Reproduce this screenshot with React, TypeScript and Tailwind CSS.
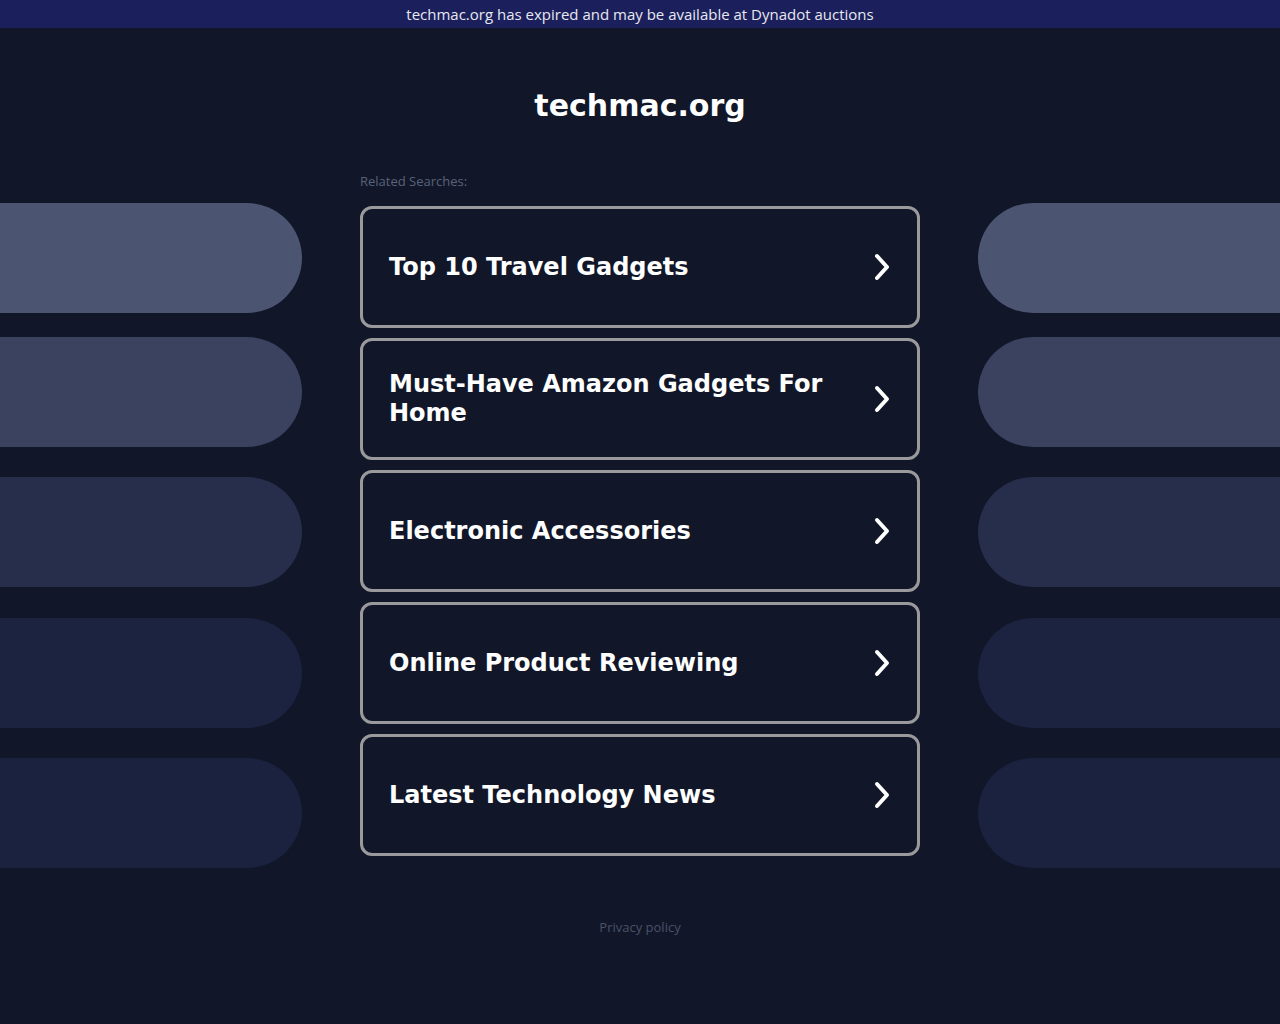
import React from 'react';

const searches = [
  'Top 10 Travel Gadgets',
  'Must-Have Amazon Gadgets For Home',
  'Electronic Accessories',
  'Online Product Reviewing',
  'Latest Technology News',
];

// decorative pills on either side, with their own top margins
const pills = [
  { color: 'bg-[#4b5572]', margin: 'mt-0' },
  { color: 'bg-[#3a4260]', margin: 'mt-[24px]' },
  { color: 'bg-[#272e4b]', margin: 'mt-[30px]' },
  { color: 'bg-[#1c2341]', margin: 'mt-[31px]' },
  { color: 'bg-[#1b2240]', margin: 'mt-[30px]' },
];

const Chevron: React.FC = () => (
  <svg width="22" height="30" viewBox="0 0 22 30" fill="none" className="shrink-0">
    <path d="M6 4 L16 15 L6 26" stroke="white" strokeWidth="4" strokeLinecap="round" strokeLinejoin="round" />
  </svg>
);

const SideColumn: React.FC<{ side: 'left' | 'right' }> = ({ side }) => (
  <div className="w-[302px] shrink-0 pt-[175px] flex flex-col">
    {pills.map((p, i) => (
      <div
        key={i}
        className={`h-[110px] ${p.color} ${p.margin} ${
          side === 'left' ? 'rounded-r-full' : 'rounded-l-full'
        }`}
      />
    ))}
  </div>
);

export default function App() {
  return (
    <div className="min-h-[1024px] bg-[#111729] font-['Open_Sans',sans-serif]">
      <div className="h-[28px] bg-[#1b1f5c] flex items-center justify-center text-[15px] text-[#e8e8f0]">
        techmac.org has expired and may be available at Dynadot auctions
      </div>

      <div className="flex justify-between">
        <SideColumn side="left" />

        <div className="w-[560px] shrink-0">
          <h1 className="pt-[58px] text-center text-[30px] leading-[40px] font-bold text-white font-['DejaVu_Sans',sans-serif]">
            techmac.org
          </h1>
          <p className="mt-[46px] text-[13px] leading-[18px] text-[#5a6279]">Related Searches:</p>
          <div className="mt-[16px] flex flex-col gap-[10px]">
            {searches.map((s) => (
              <a
                key={s}
                href="#"
                className="h-[122px] flex items-center justify-between border-[3px] border-[#9a9a9c] rounded-[12px] pl-[26px] pr-[24px] bg-[#111729]"
              >
                <span className="text-[24px] leading-[29px] font-bold text-white font-['DejaVu_Sans',sans-serif] pr-6">
                  {s}
                </span>
                <Chevron />
              </a>
            ))}
          </div>
          <p className="mt-[62px] text-center text-[13px] leading-[18px] text-[#4a5167]">Privacy policy</p>
        </div>

        <SideColumn side="right" />
      </div>
    </div>
  );
}
